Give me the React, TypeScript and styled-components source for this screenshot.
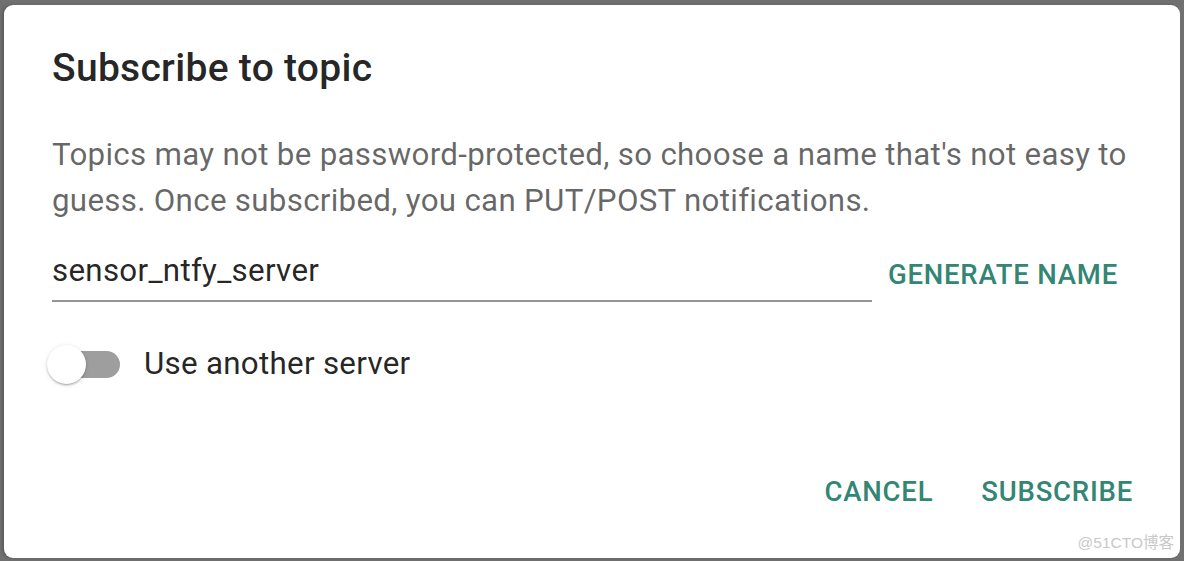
import React from "react";
import styled, { createGlobalStyle } from "styled-components";

const Global = createGlobalStyle`
  html, body { margin: 0; padding: 0; background: #707070; }
  body { font-family: Roboto, "Noto Sans", Arial, sans-serif; }
  * { box-sizing: border-box; }
`;

const Backdrop = styled.div`
  width: 1184px;
  height: 561px;
  background: #707070;
  padding: 5px 4px 3px 4px;
  overflow: hidden;
`;

const Dialog = styled.div`
  position: relative;
  width: 1176px;
  height: 553px;
  background: #ffffff;
  border-radius: 9px;
  box-shadow: -2px 0 3px rgba(0, 0, 0, 0.18);
  display: flex;
  flex-direction: column;
  padding: 33px 48px 0 48px;
`;

const Title = styled.h2`
  margin: 0;
  font-size: 39px;
  line-height: 61px;
  font-weight: 500;
  letter-spacing: 0.0075em;
  color: rgba(0, 0, 0, 0.87);
`;

const Description = styled.p`
  margin: 33px 0 0 0;
  font-size: 31.3px;
  line-height: 46px;
  font-weight: 400;
  letter-spacing: 0.00938em;
  color: rgba(0, 0, 0, 0.6);
`;

const FieldRow = styled.div`
  display: flex;
  align-items: flex-start;
  margin-top: 14px;
  margin-right: -2px;
`;

const Field = styled.div`
  flex: 1;
  border-bottom: 2px solid rgba(0, 0, 0, 0.42);
  padding: 10px 0 6px 0;
`;

const Input = styled.input`
  width: 100%;
  border: none;
  outline: none;
  background: transparent;
  padding: 0;
  margin: 0;
  font-family: inherit;
  font-size: 31.3px;
  line-height: 46px;
  height: 46px;
  color: rgba(0, 0, 0, 0.87);
  letter-spacing: 0.00938em;
`;

const TextButton = styled.button<{ $top?: number }>`
  border: none;
  background: transparent;
  font-family: inherit;
  font-weight: 500;
  font-size: 27.5px;
  line-height: 47px;
  letter-spacing: 0.02857em;
  text-transform: uppercase;
  color: #338574;
  padding: 0 16px;
  margin-top: ${(p) => p.$top ?? 0}px;
  cursor: pointer;
`;

const SwitchRow = styled.label`
  display: flex;
  align-items: center;
  height: 76px;
  margin-top: 24px;
  gap: 24px;
`;

const Track = styled.span`
  position: relative;
  display: block;
  width: 68px;
  height: 27px;
  border-radius: 14px;
  background: #9e9e9e;
`;

const Thumb = styled.span`
  position: absolute;
  left: -5px;
  top: -6px;
  width: 39px;
  height: 39px;
  border-radius: 50%;
  background: #ffffff;
  box-shadow: 0px 2px 2px -1px rgba(0, 0, 0, 0.2), 0px 1px 2px 0px rgba(0, 0, 0, 0.14),
    0px 1px 5px 0px rgba(0, 0, 0, 0.12);
`;

const SwitchLabel = styled.span`
  font-size: 31.3px;
  line-height: 46px;
  color: rgba(0, 0, 0, 0.87);
  letter-spacing: 0.00938em;
`;

const Actions = styled.div`
  margin-top: auto;
  display: flex;
  justify-content: flex-end;
  gap: 16px;
  margin-right: -17px;
  padding-bottom: 43px;
`;

const Watermark = styled.span`
  position: absolute;
  right: 6px;
  bottom: 6px;
  font-family: "Liberation Sans", "Noto Sans CJK SC", sans-serif;
  font-size: 15.5px;
  color: #c9c9c9;
`;

export default function App() {
  return (
    <>
      <Global />
      <Backdrop>
        <Dialog>
          <Title>Subscribe to topic</Title>
          <Description>
            Topics may not be password-protected, so choose a name that's not easy to guess. Once
            subscribed, you can PUT/POST notifications.
          </Description>
          <FieldRow>
            <Field>
              <Input defaultValue="sensor_ntfy_server" />
            </Field>
            <TextButton $top={13}>Generate name</TextButton>
          </FieldRow>
          <SwitchRow>
            <Track>
              <Thumb />
            </Track>
            <SwitchLabel>Use another server</SwitchLabel>
          </SwitchRow>
          <Actions>
            <TextButton>Cancel</TextButton>
            <TextButton>Subscribe</TextButton>
          </Actions>
          <Watermark>@51CTO博客</Watermark>
        </Dialog>
      </Backdrop>
    </>
  );
}
